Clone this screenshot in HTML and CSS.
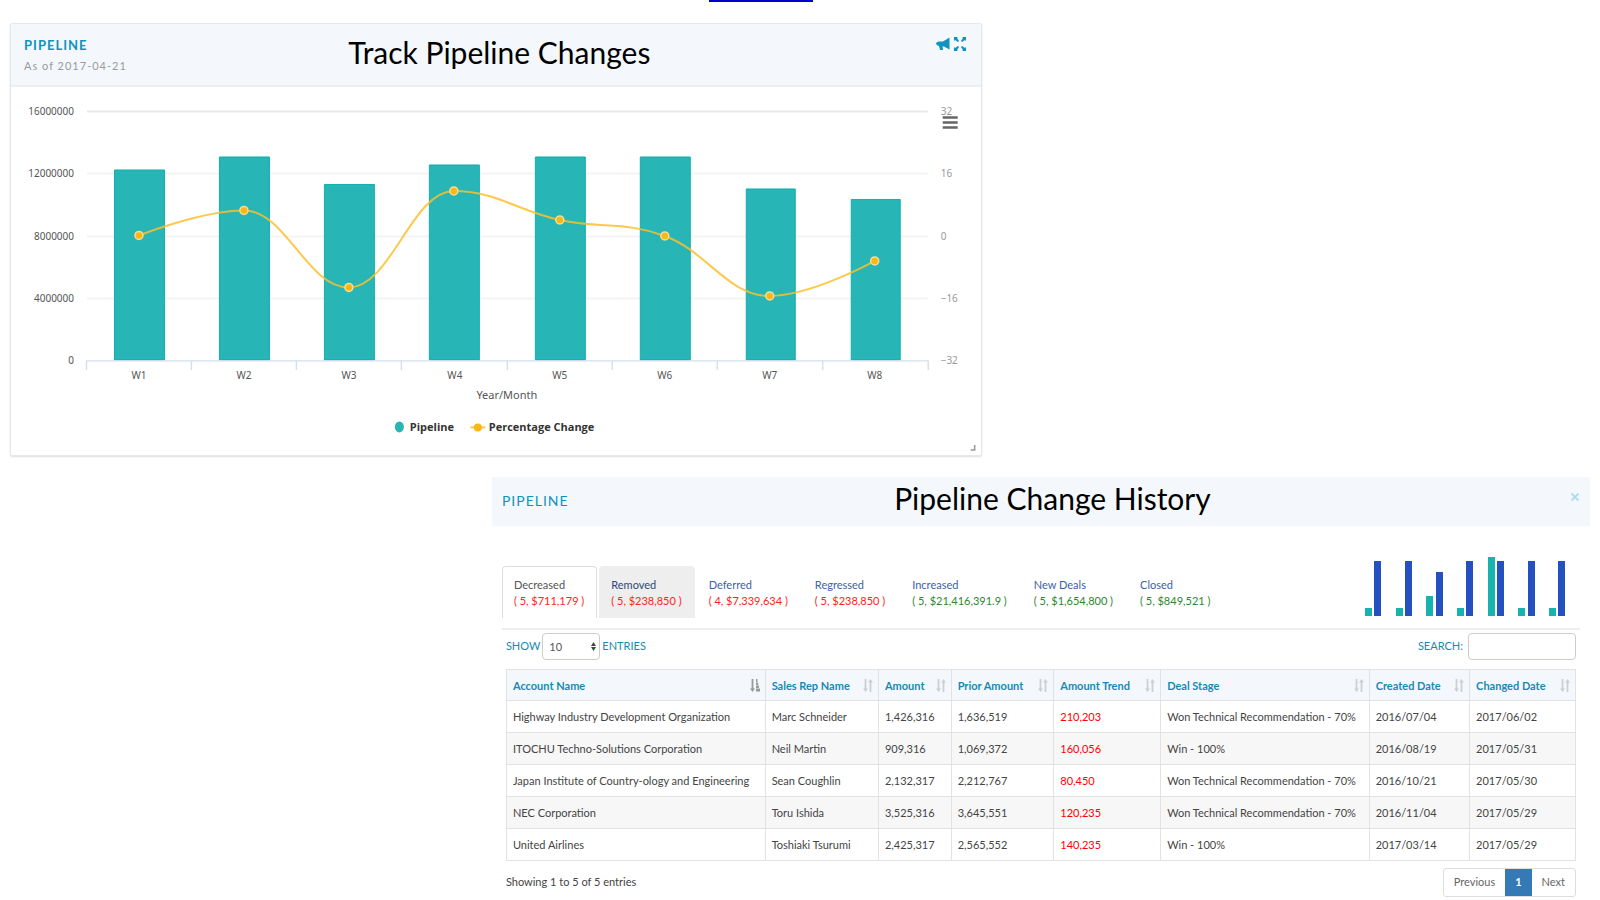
FILE: index.html
```html
<!DOCTYPE html>
<html lang="en">
<head>
<meta charset="utf-8">
<title>Pipeline</title>
<link rel="stylesheet" href="styles.css">
</head>
<body>
<nav class="topnav"><a class="toplink" href="#history" aria-label="Pipeline history"></a></nav>
<main class="page">
  <section class="card">
    <header class="card-head">
      <div class="card-name">
        <h2 class="label">PIPELINE</h2>
        <p class="asof">As of 2017-04-21</p>
      </div>
      <h1 class="title">Track Pipeline Changes</h1>
      <div class="tools">
        <button class="tool" aria-label="Announce"><svg width="14" height="16" viewBox="0 0 14 16"><path fill="#1292bf" d="M13.500 1.500v12L8 10.500H6.500l.5 3.500H4l-1-4Q0 9 0 7.500 0 6 3 5.500h4z"/></svg></button>
        <button class="tool" aria-label="Expand"><svg width="14" height="16" viewBox="0 0 14 16"><path fill="#1292bf" d="M1 1h4L4 2l2 3-1 1-3-2-1 1zM13 1v4l-1-1-3 2-1-1 2-3-1-1zM1 15v-4l1 1 3-2 1 1-2 3 1 1zM13 15H9l1-1-2-3 1-1 3 2 1-1z"/></svg></button>
      </div>
    </header>
    <svg class="chart" viewBox="11 87 970 368" role="img" aria-label="Pipeline and percentage change by week">
      <g fill="none" stroke="#f4f4f4" stroke-width="2">
        <path stroke="#e8e9ea" d="M87 111.500H928"/>
        <path d="M87 173.500H928M87 236.500H928M87 298.500H928"/>
      </g>
      <g fill="#27b5b6" stroke="#0fb0b0">
        <path d="M114.500 360V170H164.500V360zM219.500 360V157H269.500V360zM324.500 360V184.500H374.500V360zM429.500 360V165H479.500V360zM535.500 360V157H585.500V360zM640.500 360V157H690.500V360zM746.500 360V189H795.500V360zM851.500 360V199.500H900.500V360z"/>
      </g>
      <path fill="none" stroke="#d3def0" stroke-width="1.400" d="M86 361H929M86.500 361v9M191.500 361v9M296.500 361v9M401.500 361v9M507.500 361v9M612.500 361v9M717.500 361v9M823 361v9M928.500 361v9"/>
      <path fill="none" stroke="#fbc02d" stroke-opacity=".85" stroke-width="2" d="M139 235.500C139 235.500 202 210.500 244 210.500C286 210.500 307 287.500 349 287.500C391 287.500 412 191 454 191C496 191 518 211 560 220C602 229 623 220.800 665 236C707 251.200 728 296 770 296C812 296 875 261 875 261"/>
      <g fill="#fdb714" stroke="#f7dc96" stroke-width="1.500">
        <circle cx="139" cy="235.500" r="4"/><circle cx="244" cy="210.500" r="4"/><circle cx="349" cy="287.500" r="4"/><circle cx="454" cy="191" r="4"/><circle cx="560" cy="220" r="4"/><circle cx="665" cy="236" r="4"/><circle cx="770" cy="296" r="4"/><circle cx="875" cy="261" r="4"/>
      </g>
      <g class="axis" text-anchor="end">
        <text x="74" y="115">16000000</text><text x="74" y="177">12000000</text><text x="74" y="240">8000000</text><text x="74" y="302">4000000</text><text x="74" y="364">0</text>
      </g>
      <g class="axis axis-right">
        <text x="941" y="115">32</text><text x="941" y="177">16</text><text x="941" y="240">0</text><text x="941" y="302">−16</text><text x="941" y="364">−32</text>
      </g>
      <g class="axis" text-anchor="middle">
        <text x="139" y="379">W1</text><text x="244" y="379">W2</text><text x="349" y="379">W3</text><text x="455" y="379">W4</text><text x="560" y="379">W5</text><text x="665" y="379">W6</text><text x="770" y="379">W7</text><text x="875" y="379">W8</text>
      </g>
      <text class="axis-title" x="507" y="399" text-anchor="middle">Year/Month</text>
      <path fill="none" stroke="#666" stroke-width="2.500" d="M943 117.500h15M943 122.500h15M943 127.500h15"/>
      <ellipse cx="399.500" cy="427" rx="4.500" ry="5.500" fill="#27b5b6"/>
      <text class="legend" x="410" y="431">Pipeline</text>
      <path stroke="#fbc658" stroke-width="2" d="M470.500 427.500h15"/><circle cx="478" cy="427.500" r="4" fill="#fdb714"/>
      <text class="legend" x="489" y="431">Percentage Change</text>
      <path fill="none" stroke="#999" stroke-width="1.500" d="M971 450h4v-5"/>
    </svg>
  </section>

  <section class="panel" id="history">
    <header class="panel-head">
      <h2 class="panel-label">PIPELINE</h2>
      <h1 class="title">Pipeline Change History</h1>
      <button class="close" aria-label="Close"><svg width="8" height="8" viewBox="0 0 8 8"><path stroke="#a9dbec" stroke-width="1.800" d="M.5.5l7 7M7.500.5l-7 7"/></svg></button>
    </header>
    <div class="tabrow">
      <div class="tabs" role="tablist">
        <button class="tab tab-active" role="tab" aria-selected="true">Decreased<span class="down">( 5, $711,179 )</span></button>
        <button class="tab tab-hover" role="tab">Removed<span class="down">( 5, $238,850 )</span></button>
        <button class="tab" role="tab">Deferred<span class="down">( 4, $7,339,634 )</span></button>
        <button class="tab" role="tab">Regressed<span class="down">( 5, $238,850 )</span></button>
        <button class="tab" role="tab">Increased<span class="up">( 5, $21,416,391.9 )</span></button>
        <button class="tab" role="tab">New Deals<span class="up">( 5, $1,654,800 )</span></button>
        <button class="tab" role="tab">Closed<span class="up">( 5, $849,521 )</span></button>
      </div>
      <svg class="mini" width="201" height="60" viewBox="1365 555 201 60" role="img" aria-label="Deals by change type">
        <path fill="#17b3ae" d="M1365 607h7v8h-7zM1396 607h7v8h-7zM1426 595h7v20h-7zM1457 607h7v8h-7zM1488 556h7v59h-7zM1518 607h7v8h-7zM1549 607h7v8h-7z"/>
        <path fill="#2450c0" d="M1374 560h7v55h-7zM1405 560h7v55h-7zM1436 571h7v44h-7zM1466 560h7v55h-7zM1497 560h7v55h-7zM1528 560h7v55h-7zM1558 560h7v55h-7z"/>
      </svg>
    </div>
    <div class="content">
      <div class="controls">
        <div class="control">
          <label for="count">SHOW</label>
          <span class="select-wrap"><select id="count" class="select"><option>10</option></select><svg class="spin" width="5" height="9" viewBox="0 0 5 9"><path fill="#444" d="M0 4l2.500-4L5 4zM0 5h5L2.500 9z"/></svg></span>
          <label for="count">ENTRIES</label>
        </div>
        <div class="control control-search"><label for="search">SEARCH:</label><input id="search" class="search" type="text"></div>
      </div>
      <svg class="defs" width="0" height="0"><defs>
        <g id="sort"><path fill="none" stroke="#cdd0d3" stroke-width="1.800" d="M2.500 0v11M7.500 2v11"/><path fill="#cdd0d3" d="M0 9.500h5L2.500 13zM5 3.500h5L7.500 0z"/></g>
        <g id="sorted"><path fill="none" stroke="#999" stroke-width="1.800" d="M2.500 0v11"/><path fill="#999" d="M0 9.500h5L2.500 13zM6 0h1.500v3H6zM6 3.500h2.200v2.500H6zM6 6.500h3v2.500H6zM6 9.500h4v3H6z"/></g>
      </defs></svg>
      <table class="grid">
        <colgroup><col class="c1"><col class="c2"><col class="c3"><col class="c4"><col class="c5"><col class="c6"><col class="c7"><col class="c8"></colgroup>
        <thead><tr>
          <th><div class="th">Account Name<svg width="10" height="13"><use href="#sorted"/></svg></div></th>
          <th><div class="th">Sales Rep Name<svg width="10" height="13"><use href="#sort"/></svg></div></th>
          <th><div class="th">Amount<svg width="10" height="13"><use href="#sort"/></svg></div></th>
          <th><div class="th">Prior Amount<svg width="10" height="13"><use href="#sort"/></svg></div></th>
          <th><div class="th">Amount Trend<svg width="10" height="13"><use href="#sort"/></svg></div></th>
          <th><div class="th">Deal Stage<svg width="10" height="13"><use href="#sort"/></svg></div></th>
          <th><div class="th">Created Date<svg width="10" height="13"><use href="#sort"/></svg></div></th>
          <th><div class="th">Changed Date<svg width="10" height="13"><use href="#sort"/></svg></div></th>
        </tr></thead>
        <tbody>
          <tr><td>Highway Industry Development Organization</td><td>Marc Schneider</td><td>1,426,316</td><td>1,636,519</td><td class="trend">210,203</td><td>Won Technical Recommendation - 70%</td><td>2016/07/04</td><td>2017/06/02</td></tr>
          <tr><td>ITOCHU Techno-Solutions Corporation</td><td>Neil Martin</td><td>909,316</td><td>1,069,372</td><td class="trend">160,056</td><td>Win - 100%</td><td>2016/08/19</td><td>2017/05/31</td></tr>
          <tr><td>Japan Institute of Country-ology and Engineering</td><td>Sean Coughlin</td><td>2,132,317</td><td>2,212,767</td><td class="trend">80,450</td><td>Won Technical Recommendation - 70%</td><td>2016/10/21</td><td>2017/05/30</td></tr>
          <tr><td>NEC Corporation</td><td>Toru Ishida</td><td>3,525,316</td><td>3,645,551</td><td class="trend">120,235</td><td>Won Technical Recommendation - 70%</td><td>2016/11/04</td><td>2017/05/29</td></tr>
          <tr><td>United Airlines</td><td>Toshiaki Tsurumi</td><td>2,425,317</td><td>2,565,552</td><td class="trend">140,235</td><td>Win - 100%</td><td>2017/03/14</td><td>2017/05/29</td></tr>
        </tbody>
      </table>
      <footer class="foot">
        <p class="info">Showing 1 to 5 of 5 entries</p>
        <div class="pager"><button class="pg">Previous</button><button class="pg pg-on">1</button><button class="pg">Next</button></div>
      </footer>
    </div>
  </section>
</main>
</body>
</html>
```
FILE: styles.css
```css
* { box-sizing: border-box; }
body { margin: 0; background: #fff; color: #444; font: 11px/16px Lato, sans-serif; }
h1, h2, p { margin: 0; }
button { font: inherit; border: 0; background: none; padding: 0; cursor: pointer; }
svg { display: block; }

.topnav { display: flex; justify-content: center; padding-right: 78px; }
.toplink { width: 104px; height: 2px; background: #00c; }
.page { padding: 21px 10px 0; }

.card { width: 61.5%; border: 1px solid #e6e8ea; border-radius: 2px; box-shadow: 0 1px 2px #ddd; }
.card-head { display: grid; grid-template-columns: 1fr auto 1fr; align-items: start; height: 63px; padding: 12px 14px 0 13px; background: #f4f8fc; border-bottom: 2px solid #eceef0; }
.label { color: #1292bf; font-size: 13px; line-height: 18px; font-weight: 700; letter-spacing: 1px; }
.asof { color: #999; font-size: 11px; line-height: 24px; letter-spacing: 1px; }
.title { color: #000; font-size: 30px; line-height: 32px; font-weight: 400; white-space: nowrap; }
.card-head .title { margin-left: 8px; }
.tools { display: flex; justify-content: flex-end; gap: 3px; }
.chart { width: 100%; height: auto; }
.axis { font: 10px "Noto Sans", sans-serif; fill: #555; }
.axis-right { fill: #999; }
.axis-title { font: 11px "Noto Sans", sans-serif; fill: #555; }
.legend { font: 700 11px "Open Sans", sans-serif; fill: #333; }

.panel { width: 69.5%; margin: 21px 0 0 auto; }
.panel-head { display: grid; grid-template-columns: 1fr auto 1fr; align-items: start; height: 49px; padding: 5px 11px 0 10px; background: #f4f8fc; }
.panel-head .title { margin-left: 24px; }
.panel-label { color: #1292bf; font-size: 14px; line-height: 38px; font-weight: 400; letter-spacing: 1px; }
.close { justify-self: end; padding-top: 11px; }
.tabrow { display: flex; justify-content: space-between; margin: 30px 10px 0; padding-right: 14px; border-bottom: 2px solid #eee; height: 74px; }
.tabs { display: flex; gap: 2px; padding-top: 10px; }
.tab { height: 52px; padding: 2px 12px 0 11px; border: 1px solid transparent; border-bottom: 0; border-radius: 4px 4px 0 0; color: #3b62a8; text-align: left; white-space: nowrap; }
.tab span { display: block; }
.tab-active { border-color: #ddd; color: #555; }
.tab-hover { background: #eee; color: #2d4a77; }
.tab .down { color: #f22; }
.tab .up { color: #2d862d; }

.content { padding: 0 14px; }
.controls { display: flex; justify-content: space-between; padding-top: 3px; color: #1a88b3; }
.control { display: flex; align-items: center; gap: 2px; }
.control-search { gap: 5px; }
.select-wrap { position: relative; }
.select, .search { display: block; height: 27px; border: 1px solid #ccc; border-radius: 4px; background: #fff; color: #555; font: 11px Lato, sans-serif; }
.select { appearance: none; width: 58px; padding: 0 6px; }
.search { width: 108px; }
.spin { position: absolute; right: 4px; top: 9px; }
.defs { position: absolute; }
.grid { width: 100%; margin-top: 9px; border-collapse: collapse; table-layout: fixed; }
.grid th, .grid td { border: 1px solid #e2e2e2; padding: 8px 5px 7px 6px; line-height: 16px; text-align: left; white-space: nowrap; }
.grid th { background: #f4f8fc; color: #1a88b3; font-weight: 700; line-height: 15px; }
.th { display: flex; justify-content: space-between; align-items: center; }
.grid tbody tr:nth-child(even) { background: #f7f7f7; }
.grid .trend { color: #f00; }
.c1 { width: 24.2%; } .c2 { width: 10.6%; } .c3 { width: 6.8%; } .c4 { width: 9.6%; }
.c5 { width: 10%; } .c6 { width: 19.5%; } .c7 { width: 9.4%; } .c8 { width: 9.9%; }
.foot { display: flex; justify-content: space-between; align-items: flex-start; padding-top: 7px; }
.info { line-height: 28px; }
.pager { display: flex; border: 1px solid #ddd; border-radius: 3px; }
.pg { height: 27px; padding: 0 10px; color: #666; }
.pg-on { background: #337ab7; color: #fff; font-weight: 700; }
```
